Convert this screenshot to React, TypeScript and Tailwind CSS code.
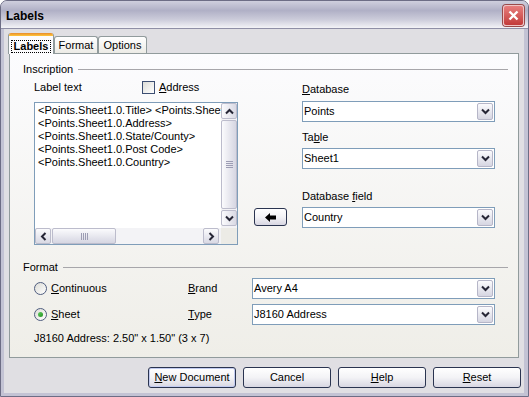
import React from 'react';

type Dir = 'up' | 'down' | 'left' | 'right';

const Chevron: React.FC<{ dir: Dir }> = ({ dir }) => {
  const vertical = dir === 'up' || dir === 'down';
  const pts = {
    up: '1,5.5 4.5,2 8,5.5',
    down: '1,1.5 4.5,5 8,1.5',
    left: '5.5,1 2,4.5 5.5,8',
    right: '1.5,1 5,4.5 1.5,8',
  }[dir];
  return (
    <svg width={vertical ? 9 : 7} height={vertical ? 7 : 9} viewBox={vertical ? '0 0 9 7' : '0 0 7 9'}>
      <polyline points={pts} fill="none" stroke="#262636" strokeWidth="2" />
    </svg>
  );
};

const ScrollButton: React.FC<{ dir: Dir }> = ({ dir }) => {
  const vertical = dir === 'up' || dir === 'down';
  return (
    <div
      className={
        vertical
          ? 'flex h-[16px] w-[16px] items-center justify-center rounded-[2px] border border-[#bcbccc] bg-gradient-to-r from-[#fbfbfd] to-[#d9d9e4]'
          : 'flex h-[16px] w-[16px] items-center justify-center rounded-[2px] border border-[#bcbccc] bg-gradient-to-b from-[#fbfbfd] to-[#d9d9e4]'
      }
    >
      <Chevron dir={dir} />
    </div>
  );
};

const Select: React.FC<{ value: string; className?: string }> = ({ value, className = '' }) => (
  <div className={`flex h-[21px] items-stretch border border-[#7f9db9] bg-white p-px ${className}`}>
    <div className="flex flex-1 items-center">{value}</div>
    <div className="flex w-[16px] items-center justify-center rounded-[2px] border border-[#b6b6c8] bg-gradient-to-b from-[#fbfbfd] to-[#d6d6e2]">
      <Chevron dir="down" />
    </div>
  </div>
);

const Radio: React.FC<{ checked?: boolean }> = ({ checked }) => (
  <div className="flex h-[13px] w-[13px] items-center justify-center rounded-full border border-[#4f5d7f] bg-gradient-to-br from-[#dcdcd6] to-white">
    {checked && <div className="h-[5px] w-[5px] rounded-full bg-gradient-to-br from-[#5fcc5f] to-[#21921f]" />}
  </div>
);

const PushButton: React.FC<{ children: React.ReactNode; isDefault?: boolean }> = ({ children, isDefault }) => (
  <div
    className={
      isDefault
        ? 'flex h-[21px] w-[88px] items-center justify-center rounded-[3px] border border-[#2a3450] bg-gradient-to-b from-white via-[#f3f3f6] to-[#d8d7e2] shadow-[inset_0_0_0_1px_#c2cbf0]'
        : 'flex h-[21px] w-[88px] items-center justify-center rounded-[3px] border border-[#2a3450] bg-gradient-to-b from-white via-[#f3f3f6] to-[#d8d7e2]'
    }
  >
    {children}
  </div>
);

const U: React.FC<{ children: React.ReactNode }> = ({ children }) => <u className="underline decoration-1">{children}</u>;

const lines = [
  '<Points.Sheet1.0.Title> <Points.Sheet1.0.Name>',
  '<Points.Sheet1.0.Address>',
  '<Points.Sheet1.0.State/County>',
  '<Points.Sheet1.0.Post Code>',
  '<Points.Sheet1.0.Country>',
];

const FixedLine: React.FC<{ label: string }> = ({ label }) => (
  <div className="flex h-[13px] items-center">
    <span>{label}</span>
    <div className="ml-[5px] mt-[-1px] h-px flex-1 bg-[#a7a6aa]" />
  </div>
);

export default function App() {
  return (
    <div className="flex h-[397px] w-[529px] flex-col overflow-hidden rounded-t-[7px] border border-[#6d6d85] bg-[#c3c3d4] font-['Liberation_Sans',Arial,sans-serif] text-[11px] leading-[13px] text-black">
      {/* title bar */}
      <div className="flex h-[28px] items-start justify-between border-b border-[#8f8fa6] bg-[linear-gradient(to_bottom,#cfcfdd_0%,#b0b0c6_35%,#cdcddb_70%,#f3f3f7_100%)] pl-[5px] pr-[4px]">
        <span className="mt-[8px] text-[12px] font-bold leading-[15px]">Labels</span>
        <div className="mt-[4px] flex h-[21px] w-[21px] items-center justify-center rounded-[3px] border border-[#f0c4c4] bg-gradient-to-b from-[#e77d7d] to-[#c23a3a] shadow-[0_0_0_1px_#9a4a4a]">
          <svg width="11" height="11" viewBox="0 0 11 11">
            <path d="M1.5 1.5 L9.5 9.5 M9.5 1.5 L1.5 9.5" stroke="white" strokeWidth="2.4" />
          </svg>
        </div>
      </div>

      {/* body */}
      <div className="ml-[3px] flex h-[364px] w-[520px] flex-col bg-[#e0dfe3] pt-[4px]">
        {/* tabs */}
        <div className="relative z-10 ml-[4px] flex h-[21px] items-end">
          <div className="flex h-[21px] w-[46px] flex-col overflow-hidden rounded-t-[3px] border-x border-[#919b9c] bg-[#fcfcfe]">
            <div className="h-[3px] bg-gradient-to-b from-[#e68b2c] to-[#ffc73c]" />
            <div className="flex flex-1 items-center justify-center pt-[2px]">
              <span className="border border-dotted border-black px-[2px] font-bold leading-[11px]">Labels</span>
            </div>
          </div>
          <div className="mb-px flex h-[17px] w-[44px] items-center justify-center rounded-t-[3px] border-x border-t border-[#919b9c] bg-gradient-to-b from-white to-[#ecebe6]">
            Format
          </div>
          <div className="mb-px flex h-[17px] w-[49px] items-center justify-center rounded-t-[3px] border-x border-t border-[#919b9c] bg-gradient-to-b from-white to-[#ecebe6]">
            Options
          </div>
        </div>

        {/* tab page */}
        <div className="-mt-px ml-[5px] flex h-[305px] w-[510px] flex-col border border-[#919b9c] bg-gradient-to-b from-[#fcfcfe] to-[#efeee8] pl-[13px] pr-[10px] pt-[9px]">
          <FixedLine label="Inscription" />

          <div className="ml-[11px] flex items-start">
            {/* label text */}
            <div className="mt-[5px] flex w-[204px] flex-col">
              <div className="flex h-[13px] items-center">
                <span className="w-[108px]">Label text</span>
                <div className="h-[13px] w-[13px] border border-[#3c4e72] bg-gradient-to-br from-[#dcdcd7] to-white" />
                <span className="ml-[4px]">
                  <U>A</U>ddress
                </span>
              </div>
              <div className="mt-[8px] flex h-[143px] w-[204px] flex-col border border-[#7f9db9] bg-white">
                <div className="flex h-[125px]">
                  <div className="flex-1 overflow-hidden whitespace-nowrap pl-[3px] pt-px">
                    {lines.map((l) => (
                      <div key={l} className="h-[13px]">
                        {l}
                      </div>
                    ))}
                  </div>
                  <div className="flex w-[16px] flex-col bg-[#f3f3f6] pb-[2px]">
                    <ScrollButton dir="up" />
                    <div className="my-px flex flex-1 items-center justify-center rounded-[2px] border border-[#bcbccc] bg-gradient-to-r from-[#fbfbfd] to-[#d6d6e2]">
                      <div className="flex flex-col gap-px">
                        {[0, 1, 2, 3].map((i) => (
                          <div key={i} className="h-px w-[7px] bg-[#9d9db4]" />
                        ))}
                      </div>
                    </div>
                    <ScrollButton dir="down" />
                  </div>
                </div>
                <div className="flex h-[16px]">
                  <div className="flex flex-1 bg-[#f3f3f6] pr-[2px]">
                    <ScrollButton dir="left" />
                    <div className="ml-px flex w-[64px] items-center justify-center rounded-[2px] border border-[#bcbccc] bg-gradient-to-b from-[#fbfbfd] to-[#d6d6e2]">
                      <div className="flex gap-px">
                        {[0, 1, 2, 3].map((i) => (
                          <div key={i} className="h-[7px] w-px bg-[#9d9db4]" />
                        ))}
                      </div>
                    </div>
                    <div className="flex-1" />
                    <ScrollButton dir="right" />
                  </div>
                  <div className="w-[16px] bg-[#ecebe6]" />
                </div>
              </div>
            </div>

            {/* insert arrow */}
            <div className="ml-[16px] mt-[132px] flex h-[18px] w-[33px] items-center justify-center rounded-[3px] border border-[#2a3450] bg-gradient-to-b from-white via-[#f3f3f6] to-[#d8d7e2]">
              <svg width="12" height="9" viewBox="0 0 12 9">
                <path d="M0 4.5 L5 0 V2.5 H11 V6.5 H5 V9 Z" fill="black" />
              </svg>
            </div>

            {/* database column */}
            <div className="ml-[15px] mt-[7px] flex w-[193px] flex-col">
              <div className="h-[13px]">
                <U>D</U>atabase
              </div>
              <Select value="Points" className="mt-[5px]" />
              <div className="mt-[9px] h-[13px]">
                Ta<U>b</U>le
              </div>
              <Select value="Sheet1" className="mt-[4px]" />
              <div className="mt-[21px] h-[13px]">
                Database <U>f</U>ield
              </div>
              <Select value="Country" className="mt-[4px]" />
            </div>
          </div>

          <div className="mt-[16px]">
            <FixedLine label="Format" />
          </div>

          <div className="ml-[11px] flex flex-col">
            <div className="mt-[4px] flex h-[21px] items-center">
              <div className="flex w-[154px] items-center gap-[4px]">
                <Radio />
                <span>
                  <U>C</U>ontinuous
                </span>
              </div>
              <span className="w-[64px]">
                <U>B</U>rand
              </span>
              <Select value="Avery A4" className="w-[243px]" />
            </div>
            <div className="mt-[5px] flex h-[21px] items-center">
              <div className="flex w-[154px] items-center gap-[4px]">
                <Radio checked />
                <span>
                  <U>S</U>heet
                </span>
              </div>
              <span className="w-[64px]">
                <U>T</U>ype
              </span>
              <Select value="J8160 Address" className="w-[243px]" />
            </div>
            <div className="mt-[7px] h-[13px]">{'J8160 Address: 2.50" x 1.50" (3 x 7)'}</div>
          </div>
        </div>

        {/* buttons */}
        <div className="mt-[9px] flex justify-end gap-[7px] pr-[3px]">
          <PushButton isDefault>
            <span>
              <U>N</U>ew Document
            </span>
          </PushButton>
          <PushButton>Cancel</PushButton>
          <PushButton>
            <span>
              <U>H</U>elp
            </span>
          </PushButton>
          <PushButton>
            <span>
              <U>R</U>eset
            </span>
          </PushButton>
        </div>
      </div>
    </div>
  );
}
